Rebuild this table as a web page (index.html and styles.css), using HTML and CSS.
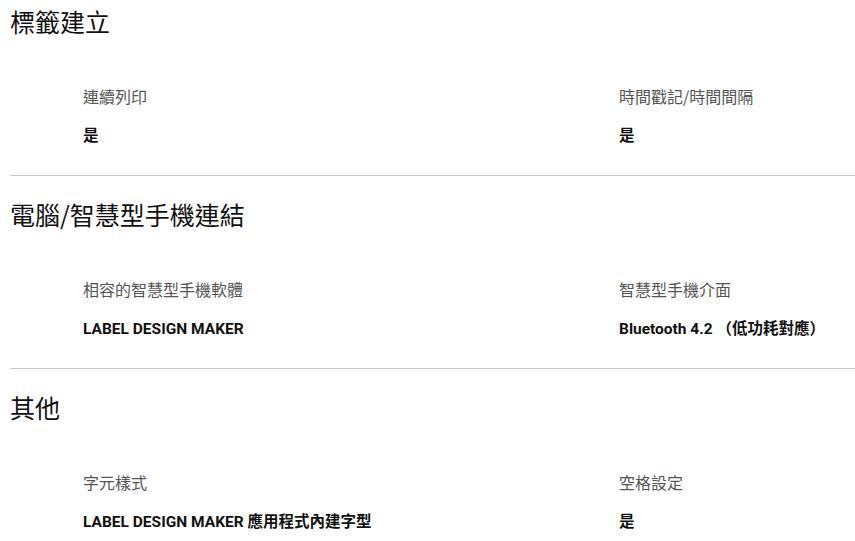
FILE: index.html
```html
<!DOCTYPE html>
<html lang="zh-Hant">
<head>
    <meta charset="UTF-8">
    <meta name="viewport" content="width=device-width, initial-scale=1.0">
    <title>規格</title>
    <link rel="stylesheet" href="styles.css">
</head>
<body>
    <div class="specs">
        <section class="spec-group">
            <h2>標籤建立</h2>
            <div class="spec-grid">
                <div class="spec-item">
                    <div class="spec-label">連續列印</div>
                    <div class="spec-value">是</div>
                </div>
                <div class="spec-item">
                    <div class="spec-label">時間戳記/時間間隔</div>
                    <div class="spec-value">是</div>
                </div>
            </div>
        </section>
        <section class="spec-group">
            <h2>電腦/智慧型手機連結</h2>
            <div class="spec-grid">
                <div class="spec-item">
                    <div class="spec-label">相容的智慧型手機軟體</div>
                    <div class="spec-value">LABEL DESIGN MAKER</div>
                </div>
                <div class="spec-item">
                    <div class="spec-label">智慧型手機介面</div>
                    <div class="spec-value">Bluetooth 4.2 （低功耗對應）</div>
                </div>
            </div>
        </section>
        <section class="spec-group">
            <h2>其他</h2>
            <div class="spec-grid">
                <div class="spec-item">
                    <div class="spec-label">字元樣式</div>
                    <div class="spec-value">LABEL DESIGN MAKER 應用程式內建字型</div>
                </div>
                <div class="spec-item">
                    <div class="spec-label">空格設定</div>
                    <div class="spec-value">是</div>
                </div>
            </div>
        </section>
    </div>
</body>
</html>
```

FILE: styles.css
```css
:root {
    --text: #111111;
    --muted: #555555;
    --line: #c8c8c8;
}
body {
    font-family: "Noto Sans", "Noto Sans CJK TC", sans-serif;
    color: var(--text);
    background-color: #ffffff;
    margin: 0;
    padding: 0;
}
.specs {
    padding-left: 10px;
}
.spec-group {
    padding: 21px 0 27px;
    border-bottom: 1px solid var(--line);
}
.spec-group:first-child {
    padding-top: 4px;
}
.spec-group:last-child {
    border-bottom: none;
}
h2 {
    font-family: "Noto Sans CJK TC", sans-serif;
    font-size: 25px;
    font-weight: 400;
    line-height: 34px;
    margin: 0;
}
.spec-grid {
    display: grid;
    grid-template-columns: 536px 1fr;
    padding-left: 73px;
    margin-top: 46px;
}
.spec-label {
    font-family: "Noto Sans CJK TC", sans-serif;
    font-size: 16px;
    line-height: 24px;
    color: var(--muted);
}
.spec-value {
    font-family: Roboto, "Noto Sans CJK TC", sans-serif;
    font-size: 15.5px;
    font-weight: 700;
    line-height: 24px;
    margin-top: 16px;
}
```
